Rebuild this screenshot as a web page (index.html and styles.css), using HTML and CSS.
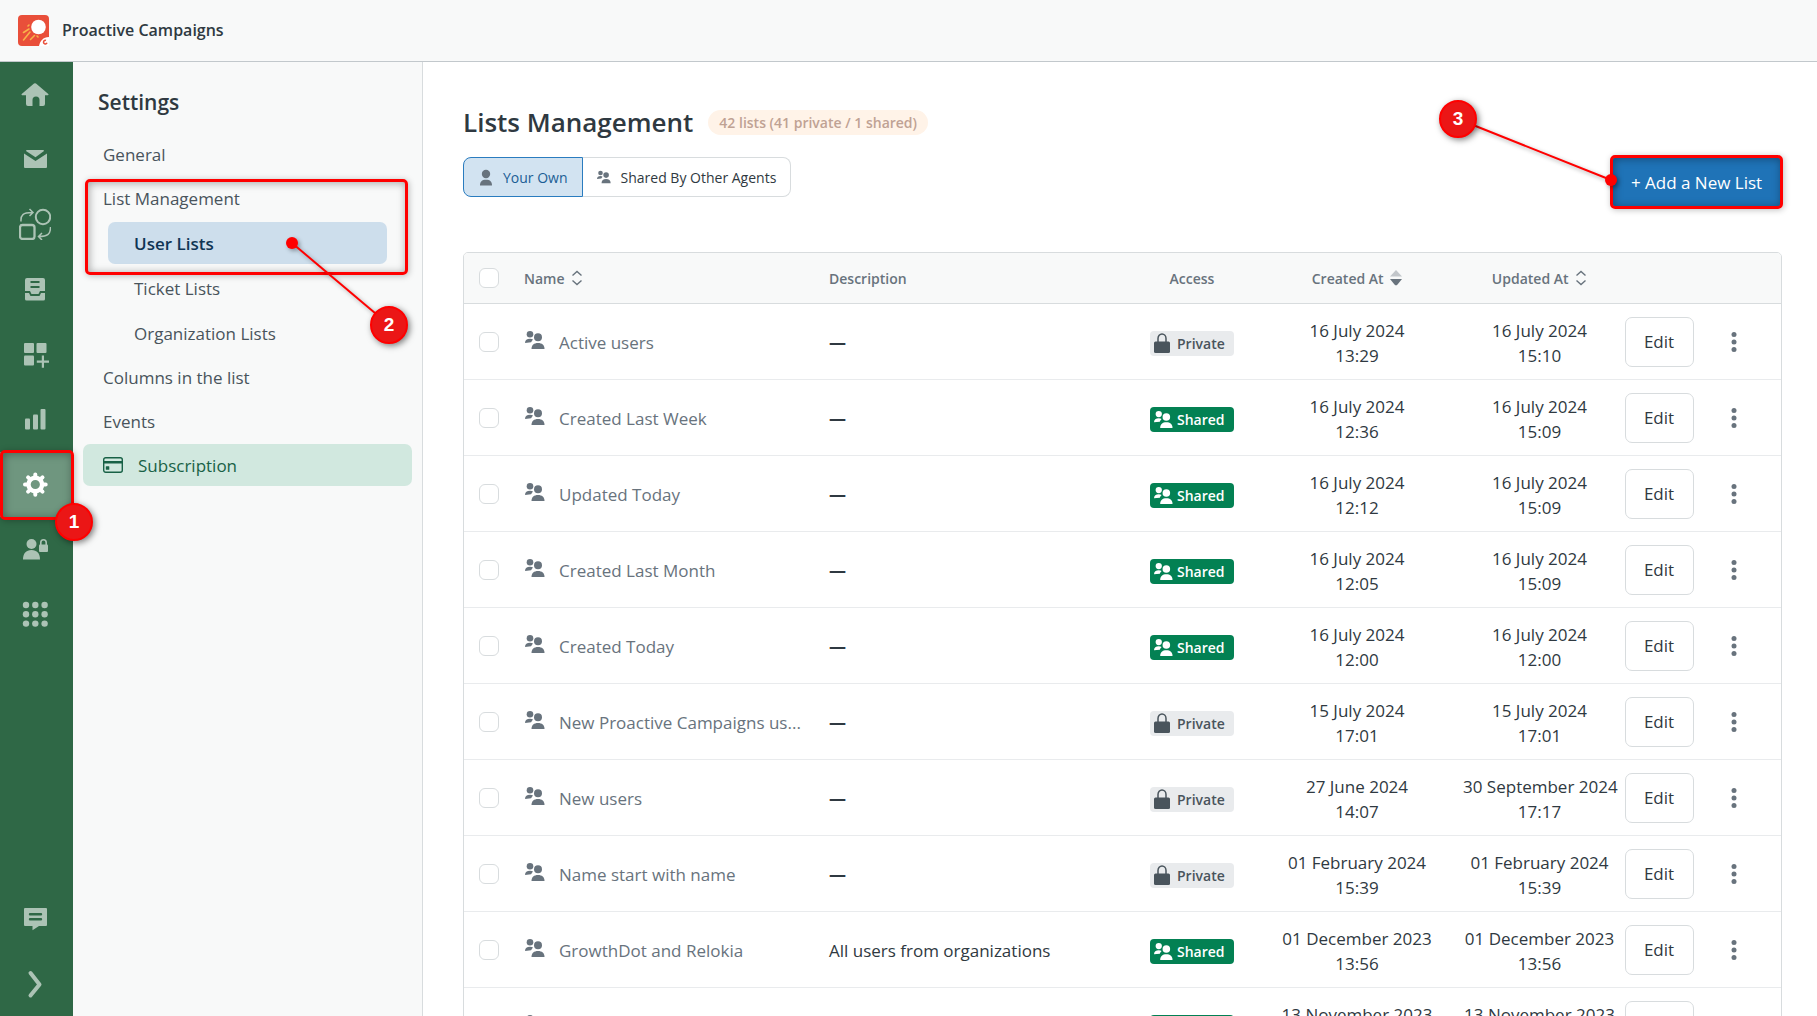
FILE: index.html
```html
<!DOCTYPE html>
<html lang="en">
<head>
<meta charset="utf-8">
<title>Proactive Campaigns</title>
<link rel="stylesheet" href="styles.css">
</head>
<body>
<svg class="sprite" aria-hidden="true">
  <symbol id="users" viewBox="0 0 20 20"><circle cx="5" cy="4.300" r="3.300"/><path d="M0 13c0-3 2-4.300 5-4.300 1.300 0 2.300.3 3 .8-.8 1-1.500 1.800-1.900 2.800z"/><circle cx="13" cy="7.300" r="4"/><path d="M6.500 19c0-4 2.500-6 6.500-6s6.500 2 6.500 6z"/></symbol>
  <symbol id="user" viewBox="0 0 16 18"><circle cx="8" cy="6" r="4.200"/><path d="M2 17.500c0-3.800 1.800-5.700 6-5.700s6 1.900 6 5.700z"/></symbol>
  <symbol id="lock" viewBox="0 0 16 22"><path d="M4 10V6.500a4 4.500 0 0 1 8 0V10" fill="none" stroke="currentColor" stroke-width="1.500"/><rect y="9.500" width="16" height="11.500" rx="1.500"/></symbol>
  <symbol id="sort" viewBox="0 0 12 16"><path d="M1.500 5.500 6 1.500l4.500 4M1.500 10.500l4.500 4 4.500-4" fill="none" stroke="currentColor" stroke-width="1.400"/></symbol>
  <symbol id="sort-desc" viewBox="0 0 12 16"><path d="M0 6.500 6 0l6 6.500z" opacity=".38"/><path d="M0 9h12l-4.500 5.500a2 2 0 0 1-3 0z"/></symbol>
  <symbol id="more" viewBox="0 0 6 20"><circle cx="3" cy="2.500" r="2.500"/><circle cx="3" cy="10" r="2.500"/><circle cx="3" cy="17.500" r="2.500"/></symbol>
</svg>

<header class="topbar">
  <svg class="logo" viewBox="0 0 31 31" aria-hidden="true">
    <rect width="31" height="31" rx="4" fill="#e94f3a"/>
    <circle cx="20.500" cy="12" r="7.300" fill="#fff"/>
    <path d="M5.500 17.500 11 14M5.500 25l6.500-8M12.500 24.500l4-4M10 11l1-1M20 22l-1-1" stroke="#f8b24a" stroke-width="1.600" stroke-linecap="round" fill="none"/>
    <path d="M21 31c1-5 4-9 10-9v9z" fill="#fff"/>
    <path d="M28 25.500a1.800 1.800 0 1 0 1 2.300" stroke="#e94f3a" stroke-width="1.500" fill="none"/>
  </svg>
  <span class="brand">Proactive Campaigns</span>
</header>

<div class="shell">
  <nav class="rail" aria-label="Main">
    <a class="rail-item" href="#home" aria-label="Home"><svg viewBox="0 0 32 32"><path d="M15 5.600a1.500 1.500 0 0 1 2 0L29.300 16a.7.7 0 0 1-.5 1.200H26V26a2 2 0 0 1-2 2h-3.500v-6a3.500 3.500 0 0 0-7 0v6H9a2 2 0 0 1-2-2v-8.800H3.200a.7.7 0 0 1-.5-1.200z"/></svg></a>
    <a class="rail-item" href="#mail" aria-label="Campaigns"><svg viewBox="0 0 32 32"><path d="M8 7h16a1 1 0 0 1 1 1l-8.500 6.200L7 8a1 1 0 0 1 1-1z"/><path d="M5 10.500 16.500 18 28 10.500V24a1 1 0 0 1-1 1H6a1 1 0 0 1-1-1z"/></svg></a>
    <a class="rail-item" href="#flows" aria-label="Flows"><svg viewBox="0 0 32 32"><g fill="none" stroke="currentColor" stroke-width="2"><circle cx="24" cy="9" r="7.200"/><rect x="1" y="17" width="14.500" height="14" rx="2.500" stroke-width="2.300"/><path d="M2 13.500C1.500 7 4 4.500 13 4.500M10.500 1l3.500 3.500L10.500 8M31.500 19c0 7-2.500 9.500-12 9.500M23 25l-3.500 3.500L23 32" stroke-width="1.500"/></g></svg></a>
    <a class="rail-item" href="#lists" aria-label="Templates"><svg viewBox="0 0 32 32"><path fill-rule="evenodd" d="M8 5h16a2 2 0 0 1 2 2v11h-5l-1.500 3h-7L11 18H6V7a2 2 0 0 1 2-2zm3.500 3v2h9V8zm0 5v2h9v-2z"/><path d="M6 20h4l1.500 3h9l1.500-3h4v6a1.500 1.500 0 0 1-1.500 1.500h-17A1.500 1.500 0 0 1 6 26z"/></svg></a>
    <a class="rail-item" href="#apps" aria-label="Widgets"><svg viewBox="0 0 32 32"><rect x="5" y="5" width="10" height="10" rx="1"/><rect x="17.500" y="5" width="10" height="10" rx="1"/><rect x="5" y="17.500" width="10" height="10" rx="1"/><path d="M22.800 17.500h2.200v5h5v2.200h-5v5h-2.200v-5h-5v-2.200h5z"/></svg></a>
    <a class="rail-item" href="#reports" aria-label="Reports"><svg viewBox="0 0 32 32"><rect x="6" y="15.500" width="5" height="11" rx="1"/><rect x="14" y="11.500" width="5" height="15" rx="1"/><rect x="21.500" y="6" width="5" height="20.500" rx="1"/></svg></a>
    <div class="callout-anchor">
      <a class="rail-item active" href="#settings" aria-label="Settings"><svg viewBox="0 0 32 32"><circle cx="16.300" cy="16.500" r="6.800" fill="none" stroke="currentColor" stroke-width="4.400"/><path d="M16.300 6.500V9M16.300 24v2.800M6 16.500h2.500M24 16.500h2.700M9.100 9.300l1.900 1.900M21.600 21.800l1.900 1.900M9.100 23.700l1.900-1.900M21.600 11.200l1.900-1.900" stroke="currentColor" stroke-width="4" stroke-linecap="round"/></svg></a>
      <span class="frame frame-rail"></span>
      <span class="step step-one">1</span>
    </div>
    <a class="rail-item" href="#access" aria-label="Access"><svg viewBox="0 0 32 32"><circle cx="12.500" cy="11" r="5"/><path d="M4 26.500c0-6 3-9.500 8.500-9.500s8.500 3.500 8.500 9.500z"/><rect x="20" y="11.500" width="9" height="7.500" rx="1"/><path d="M21.800 12V9.500a2.700 2.700 0 0 1 5.400 0V12" fill="none" stroke="currentColor" stroke-width="1.600"/></svg></a>
    <a class="rail-item" href="#more" aria-label="More apps"><svg viewBox="0 0 32 32"><circle cx="7" cy="7" r="3.200"/><circle cx="16.300" cy="7" r="3.200"/><circle cx="25.600" cy="7" r="3.200"/><circle cx="7" cy="16.300" r="3.200"/><circle cx="16.300" cy="16.300" r="3.200"/><circle cx="25.600" cy="16.300" r="3.200"/><circle cx="7" cy="25.600" r="3.200"/><circle cx="16.300" cy="25.600" r="3.200"/><circle cx="25.600" cy="25.600" r="3.200"/></svg></a>
    <a class="rail-item rail-end" href="#chat" aria-label="Feedback"><svg viewBox="0 0 32 32"><path fill-rule="evenodd" d="M6 6h21a1 1 0 0 1 1 1v16a1 1 0 0 1-1 1h-7l-6.500 4.200V24H6a1 1 0 0 1-1-1V7a1 1 0 0 1 1-1zm5 5a1.200 1.200 0 0 0 0 2.400h11a1.200 1.200 0 0 0 0-2.400zm0 5a1.200 1.200 0 0 0 0 2.400h11a1.200 1.200 0 0 0 0-2.400z"/></svg></a>
    <button class="rail-item" type="button" aria-label="Expand menu"><svg viewBox="0 0 32 32"><path d="m11.500 6 9 11.500-9 11" fill="none" stroke="currentColor" stroke-width="4" stroke-linecap="round" stroke-linejoin="round"/></svg></button>
  </nav>

  <aside class="settings">
    <h2>Settings</h2>
    <nav class="menu" aria-label="Settings">
      <a href="#general">General</a>
      <div class="group callout-anchor">
        <a href="#list-management">List Management</a>
        <a class="sub current" href="#user-lists" aria-current="page">User Lists</a>
        <a class="sub" href="#ticket-lists">Ticket Lists</a>
        <a class="sub" href="#organization-lists">Organization Lists</a>
        <span class="frame frame-menu"></span>
        <svg class="pointer pointer-menu" viewBox="0 0 110 95" aria-hidden="true"><path d="M8 8l96 81"/><circle cx="8" cy="8" r="6"/></svg>
        <span class="step step-two">2</span>
      </div>
      <a href="#columns">Columns in the list</a>
      <a href="#events">Events</a>
      <a class="subscription" href="#subscription"><svg viewBox="0 0 20 16" aria-hidden="true"><rect x=".7" y=".7" width="18.600" height="14.600" rx="2" fill="none" stroke="currentColor" stroke-width="1.400"/><path d="M0 4h20v2.500H0z"/><rect x="2.800" y="9.300" width="3.500" height="3.500" rx=".5"/></svg>Subscription</a>
    </nav>
  </aside>

  <main class="main">
    <div class="page-head">
      <div class="heading">
        <div class="title-row"><h1>Lists Management</h1><span class="count">42 lists (41 private / 1 shared)</span></div>
        <div class="tabs">
          <button class="tab selected" type="button" aria-pressed="true"><svg class="tab-user"><use href="#user"/></svg>Your Own</button>
          <button class="tab" type="button" aria-pressed="false"><svg class="tab-users"><use href="#users"/></svg>Shared By Other Agents</button>
        </div>
      </div>
      <div class="add callout-anchor">
        <button class="add-button" type="button">+ Add a New List</button>
        <span class="frame frame-add"></span>
        <svg class="pointer pointer-add" viewBox="0 0 170 80" aria-hidden="true"><path d="M8 8l153 61"/><circle cx="161" cy="69" r="6"/></svg>
        <span class="step step-three">3</span>
      </div>
    </div>

    <div class="card">
      <table>
        <colgroup><col class="c-check"><col class="c-name"><col><col class="c-access"><col class="c-created"><col class="c-updated"><col class="c-edit"><col class="c-more"></colgroup>
        <thead>
          <tr>
            <th><input type="checkbox" aria-label="Select all"></th>
            <th class="left">Name <svg class="sort"><use href="#sort"/></svg></th>
            <th class="left">Description</th>
            <th>Access</th>
            <th>Created At <svg class="sort"><use href="#sort-desc"/></svg></th>
            <th>Updated At <svg class="sort"><use href="#sort"/></svg></th>
            <td></td><td></td>
          </tr>
        </thead>
        <tbody>
          <tr>
            <td><input type="checkbox" aria-label="Select Active users"></td>
            <td class="text left"><div class="name"><svg><use href="#users"/></svg><span>Active users</span></div></td>
            <td class="text left none">—</td>
            <td class="text"><span class="badge"><svg class="b-lock"><use href="#lock"/></svg>Private</span></td>
            <td class="text">16 July 2024<br>13:29</td><td class="text">16 July 2024<br>15:10</td>
            <td><button class="edit" type="button">Edit</button></td>
            <td class="last"><button class="more" type="button" aria-label="More actions"><svg><use href="#more"/></svg></button></td>
          </tr>
          <tr>
            <td><input type="checkbox" aria-label="Select Created Last Week"></td>
            <td class="text left"><div class="name"><svg><use href="#users"/></svg><span>Created Last Week</span></div></td>
            <td class="text left none">—</td>
            <td class="text"><span class="badge shared"><svg class="b-users"><use href="#users"/></svg>Shared</span></td>
            <td class="text">16 July 2024<br>12:36</td><td class="text">16 July 2024<br>15:09</td>
            <td><button class="edit" type="button">Edit</button></td>
            <td class="last"><button class="more" type="button" aria-label="More actions"><svg><use href="#more"/></svg></button></td>
          </tr>
          <tr>
            <td><input type="checkbox" aria-label="Select Updated Today"></td>
            <td class="text left"><div class="name"><svg><use href="#users"/></svg><span>Updated Today</span></div></td>
            <td class="text left none">—</td>
            <td class="text"><span class="badge shared"><svg class="b-users"><use href="#users"/></svg>Shared</span></td>
            <td class="text">16 July 2024<br>12:12</td><td class="text">16 July 2024<br>15:09</td>
            <td><button class="edit" type="button">Edit</button></td>
            <td class="last"><button class="more" type="button" aria-label="More actions"><svg><use href="#more"/></svg></button></td>
          </tr>
          <tr>
            <td><input type="checkbox" aria-label="Select Created Last Month"></td>
            <td class="text left"><div class="name"><svg><use href="#users"/></svg><span>Created Last Month</span></div></td>
            <td class="text left none">—</td>
            <td class="text"><span class="badge shared"><svg class="b-users"><use href="#users"/></svg>Shared</span></td>
            <td class="text">16 July 2024<br>12:05</td><td class="text">16 July 2024<br>15:09</td>
            <td><button class="edit" type="button">Edit</button></td>
            <td class="last"><button class="more" type="button" aria-label="More actions"><svg><use href="#more"/></svg></button></td>
          </tr>
          <tr>
            <td><input type="checkbox" aria-label="Select Created Today"></td>
            <td class="text left"><div class="name"><svg><use href="#users"/></svg><span>Created Today</span></div></td>
            <td class="text left none">—</td>
            <td class="text"><span class="badge shared"><svg class="b-users"><use href="#users"/></svg>Shared</span></td>
            <td class="text">16 July 2024<br>12:00</td><td class="text">16 July 2024<br>12:00</td>
            <td><button class="edit" type="button">Edit</button></td>
            <td class="last"><button class="more" type="button" aria-label="More actions"><svg><use href="#more"/></svg></button></td>
          </tr>
          <tr>
            <td><input type="checkbox" aria-label="Select New Proactive Campaigns us..."></td>
            <td class="text left"><div class="name"><svg><use href="#users"/></svg><span>New Proactive Campaigns us...</span></div></td>
            <td class="text left none">—</td>
            <td class="text"><span class="badge"><svg class="b-lock"><use href="#lock"/></svg>Private</span></td>
            <td class="text">15 July 2024<br>17:01</td><td class="text">15 July 2024<br>17:01</td>
            <td><button class="edit" type="button">Edit</button></td>
            <td class="last"><button class="more" type="button" aria-label="More actions"><svg><use href="#more"/></svg></button></td>
          </tr>
          <tr>
            <td><input type="checkbox" aria-label="Select New users"></td>
            <td class="text left"><div class="name"><svg><use href="#users"/></svg><span>New users</span></div></td>
            <td class="text left none">—</td>
            <td class="text"><span class="badge"><svg class="b-lock"><use href="#lock"/></svg>Private</span></td>
            <td class="text">27 June 2024<br>14:07</td><td class="text">30 September 2024<br>17:17</td>
            <td><button class="edit" type="button">Edit</button></td>
            <td class="last"><button class="more" type="button" aria-label="More actions"><svg><use href="#more"/></svg></button></td>
          </tr>
          <tr>
            <td><input type="checkbox" aria-label="Select Name start with name"></td>
            <td class="text left"><div class="name"><svg><use href="#users"/></svg><span>Name start with name</span></div></td>
            <td class="text left none">—</td>
            <td class="text"><span class="badge"><svg class="b-lock"><use href="#lock"/></svg>Private</span></td>
            <td class="text">01 February 2024<br>15:39</td><td class="text">01 February 2024<br>15:39</td>
            <td><button class="edit" type="button">Edit</button></td>
            <td class="last"><button class="more" type="button" aria-label="More actions"><svg><use href="#more"/></svg></button></td>
          </tr>
          <tr>
            <td><input type="checkbox" aria-label="Select GrowthDot and Relokia"></td>
            <td class="text left"><div class="name"><svg><use href="#users"/></svg><span>GrowthDot and Relokia</span></div></td>
            <td class="text left">All users from organizations</td>
            <td class="text"><span class="badge shared"><svg class="b-users"><use href="#users"/></svg>Shared</span></td>
            <td class="text">01 December 2023<br>13:56</td><td class="text">01 December 2023<br>13:56</td>
            <td><button class="edit" type="button">Edit</button></td>
            <td class="last"><button class="more" type="button" aria-label="More actions"><svg><use href="#more"/></svg></button></td>
          </tr>
          <tr>
            <td><input type="checkbox" aria-label="Select list"></td>
            <td class="text left"><div class="name"><svg><use href="#users"/></svg><span>&nbsp;</span></div></td>
            <td class="text left"></td>
            <td class="text"><span class="badge shared"><svg class="b-users"><use href="#users"/></svg>Shared</span></td>
            <td class="text">13 November 2023<br>&nbsp;</td><td class="text">13 November 2023<br>&nbsp;</td>
            <td><button class="edit" type="button">Edit</button></td>
            <td class="last"><button class="more" type="button" aria-label="More actions"><svg><use href="#more"/></svg></button></td>
          </tr>
        </tbody>
      </table>
    </div>
  </main>
</div>
</body>
</html>
```
FILE: styles.css
```css
* { box-sizing: border-box; }

body {
  margin: 0;
  height: 100vh;
  display: flex;
  flex-direction: column;
  overflow: hidden;
  background: #fff;
  color: #2f3941;
  font: 17px/25px "Open Sans", "Noto Sans", sans-serif;
}

button { font: inherit; color: inherit; cursor: pointer; }
a { color: inherit; text-decoration: none; }
svg { fill: currentColor; flex: none; }
h1, h2 { margin: 0; font-weight: 600; }
.sprite { display: none; }

.topbar {
  display: flex;
  align-items: center;
  gap: 13px;
  flex: none;
  height: 62px;
  padding-left: 18px;
  border-bottom: 1px solid #c2c8cc;
  background: #f8f9f9;
}
.logo { width: 31px; height: 31px; }
.brand { font-size: 16px; font-weight: 600; }

.shell { display: flex; flex: 1; min-height: 0; }

/* Icon rail */
.rail {
  display: flex;
  flex-direction: column;
  flex: none;
  width: 73px;
  background: #2f6846;
  color: #acc3b5;
}
.rail-item {
  display: flex;
  justify-content: center;
  width: 100%;
  height: 65px;
  padding: 16px 3px 17px 0;
  border: 0;
  background: none;
}
.rail-item svg { width: 32px; height: 32px; }
.rail-item.active { background: #6f967f; color: #fff; }
.rail-end { margin-top: auto; }

/* Settings menu */
.settings {
  flex: none;
  width: 350px;
  padding: 25px 10px 0;
  border-right: 1px solid #d8dcde;
  background: #f8f9f9;
  color: #49545c;
}
.settings h2 {
  padding-left: 15px;
  color: #2f3941;
  font-size: 21px;
  line-height: 30px;
}
.menu { display: flex; flex-direction: column; gap: 2px; margin-top: 16px; }
.menu a {
  display: flex;
  align-items: center;
  height: 42px;
  padding-left: 20px;
  border-radius: 7px;
}
.group { display: flex; flex-direction: column; gap: 3px; }
.menu .sub { margin: 0 25px; padding-left: 26px; }
.menu .current { background: #cddeec; color: #0f3554; font-weight: 600; }
.menu .subscription { gap: 15px; background: #d1e8df; color: #186146; }
.subscription svg { width: 20px; height: 16px; }

/* Main area */
.main { flex: 1; min-width: 0; padding: 42px 35px 0 40px; }
.page-head { display: flex; justify-content: space-between; }
.title-row { display: flex; align-items: center; gap: 15px; height: 36px; }
h1 { font-size: 26px; line-height: 36px; }
.count {
  padding: 0 11px;
  border-radius: 13px;
  background: #fff3e8;
  color: #bfa294;
  font-size: 14px;
  font-weight: 600;
}
.tabs { display: flex; margin-top: 17px; }
.tab {
  display: flex;
  align-items: center;
  height: 40px;
  padding: 0 14px;
  border: 1px solid #d8dcde;
  border-left: 0;
  border-radius: 0 8px 8px 0;
  background: #fff;
  font-size: 14px;
}
.tab.selected {
  border: 1px solid #2a7cbf;
  border-radius: 8px 0 0 8px;
  background: #d2e3f1;
  color: #1b5e95;
}
.tab svg { color: #68737d; }
.tab-user { width: 16px; height: 18px; margin-right: 9px; }
.tab-users { width: 14px; height: 14px; margin-right: 10px; }
.add { margin-top: 52px; height: 52px; }
.add-button {
  width: 171px;
  height: 52px;
  padding: 0;
  border: 0;
  border-radius: 5px;
  background: #1f73b7;
  color: #fff;
}

/* Lists table */
.card {
  margin-top: 44px;
  border: 1px solid #d8dcde;
  border-radius: 5px 5px 0 0;
  overflow: hidden;
}
table { width: 100%; border-collapse: separate; border-spacing: 0; table-layout: fixed; }
.c-check { width: 44px; }
.c-name { width: 305px; }
.c-access { width: 118px; }
.c-created { width: 212px; }
.c-updated { width: 153px; }
.c-edit { width: 86px; }
.c-more { width: 79px; }
th, td { padding: 0; text-align: center; vertical-align: middle; white-space: nowrap; }
thead th, thead td {
  height: 51px;
  border-bottom: 1px solid #d8dcde;
  background: #f8f9f9;
  color: #68737d;
  font-size: 14px;
  font-weight: 600;
}
tbody td { height: 76px; border-bottom: 1px solid #e9ebed; }
th.left, td.left { padding: 0 16px; text-align: left; }
tbody td.text { padding-top: 2px; }
.sort { width: 12px; height: 16px; margin-left: 3px; vertical-align: -2px; }
input[type="checkbox"] {
  appearance: none;
  display: block;
  width: 20px;
  height: 20px;
  margin: 0 0 0 15px;
  border: 1px solid #d8dcde;
  border-radius: 6px;
  background: #fff;
}
.name { display: flex; gap: 14px; padding-left: 1px; color: #68737d; }
.name svg { width: 20px; height: 20px; }
.none { font-weight: 700; }
.badge {
  display: inline-flex;
  align-items: center;
  width: 84px;
  height: 25px;
  padding-left: 4px;
  border-radius: 4px;
  background: #e9ebed;
  color: #49545c;
  font-size: 14px;
  font-weight: 600;
  vertical-align: middle;
}
.badge.shared { background: #038153; color: #fff; }
.b-lock { width: 16px; height: 22px; margin-right: 7px; }
.b-users { width: 19px; height: 19px; margin-right: 4px; }
.edit {
  width: 69px;
  height: 50px;
  padding: 0;
  border: 1px solid #d8dcde;
  border-radius: 7px;
  background: #fff;
}
td.last { padding-right: 15px; }
.more { display: block; margin: 0 auto; padding: 0; border: 0; background: none; color: #68737d; line-height: 0; }
.more svg { width: 6px; height: 20px; }

/* Numbered callouts laid over the page */
.callout-anchor { position: relative; }
.frame {
  position: absolute;
  border: 3px solid #f00;
  border-radius: 5px;
  box-shadow: 1px 1px 6px rgb(0 0 0 / 25%), inset 1px 1px 8px rgb(0 0 0 / 35%);
  pointer-events: none;
}
.step {
  position: absolute;
  z-index: 2;
  width: 38px;
  height: 38px;
  border: 2px solid #f00;
  border-radius: 50%;
  background: #eb1616;
  box-shadow: 2px 2px 6px rgb(0 0 0 / 50%);
  color: #fff;
  font: bold 19px/33px "Liberation Sans", sans-serif;
  text-align: center;
}
.pointer {
  position: absolute;
  z-index: 1;
  fill: #f00;
  stroke: #f00;
  stroke-width: 2;
  filter: drop-shadow(2px 2px 2px rgb(0 0 0 / 35%));
  pointer-events: none;
}
.pointer circle { stroke: none; }
.frame-rail { inset: -2px -1px -3px 0; }
.step-one { left: 55px; top: 51px; }
.frame-menu { left: 2px; right: 4px; top: 2px; height: 96px; }
.pointer-menu { left: 201px; top: 58px; width: 110px; height: 95px; }
.step-two { left: 287px; top: 129px; }
.frame-add { inset: -1px; }
.pointer-add { right: 162px; top: -45px; width: 170px; height: 80px; }
.step-three { right: 305px; top: -56px; }
```
